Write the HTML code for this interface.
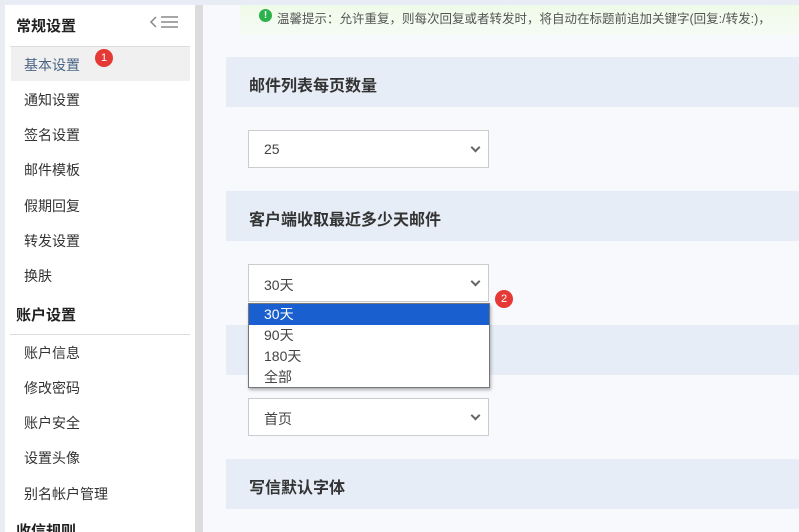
<!DOCTYPE html>
<html><head><meta charset="utf-8"><style>
*{margin:0;padding:0;box-sizing:border-box}
html,body{width:799px;height:532px;overflow:hidden}
body{background:#f8f9fc;font-family:"Liberation Sans","Noto Sans CJK SC",sans-serif;position:relative}
.a{position:absolute}
.side{left:5px;top:5px;width:190px;height:527px;background:#fff}
.h{position:absolute;left:16px;font-size:15px;font-weight:bold;color:#222}
.it{position:absolute;left:24px;font-size:14px;color:#333}
.hd{position:absolute;left:226px;width:573px;height:50px;background:#e6edf6}
.hd span{position:absolute;left:23px;top:15px;font-size:16px;font-weight:bold;color:#333}
.sel{position:absolute;left:248px;width:241px;height:38px;background:#fff;border:1px solid #ccc;font-size:14px;color:#444;padding:10px 0 0 15px}
.sel:after{content:"";position:absolute;right:9px;top:13px;width:5px;height:5px;border-right:2px solid #666;border-bottom:2px solid #666;transform:rotate(45deg)}
.badge{position:absolute;width:18px;height:18px;border-radius:50%;background:#e53935;color:#fff;font-size:11px;text-align:center;line-height:18px}
</style></head><body>
<div class="a" style="left:0;top:0;width:799px;height:5px;background:#e8edf5"></div>
<div class="a" style="left:0;top:0;width:5px;height:532px;background:#e9ecf1"></div>
<div class="a side"></div>
<div class="a" style="left:195px;top:5px;width:8px;height:527px;background:#dcdcdc"></div>
<div class="a" style="left:226px;top:5px;width:573px;height:527px;background:#f7f9fd"></div>
<div class="h" style="top:15px">常规设置</div>
<svg class="a" style="left:148px;top:14px" width="32" height="18" viewBox="0 0 32 18"><path d="M8 3 L3 8 L8 13" fill="none" stroke="#888" stroke-width="1.5"/><path d="M13 3H30M13 8H30M13 13H30" stroke="#888" stroke-width="1.6"/></svg>
<div class="a" style="left:10px;top:46px;width:180px;height:1px;background:#ddd"></div>
<div class="a" style="left:11px;top:47px;width:179px;height:34px;background:#f0f0f0"></div>
<div class="it" style="top:55px;color:#4a6585">基本设置</div>
<div class="badge" style="left:95px;top:49px">1</div>
<div class="it" style="top:90px">通知设置</div>
<div class="it" style="top:125px">签名设置</div>
<div class="it" style="top:160px">邮件模板</div>
<div class="it" style="top:196px">假期回复</div>
<div class="it" style="top:231px">转发设置</div>
<div class="it" style="top:266px">换肤</div>
<div class="h" style="top:304px">账户设置</div>
<div class="a" style="left:10px;top:334px;width:180px;height:1px;background:#ddd"></div>
<div class="it" style="top:343px">账户信息</div>
<div class="it" style="top:378px">修改密码</div>
<div class="it" style="top:413px">账户安全</div>
<div class="it" style="top:448px">设置头像</div>
<div class="it" style="top:484px">别名帐户管理</div>
<div class="h" style="top:520px">收信规则</div>
<div class="a" style="left:240px;top:5px;width:559px;height:30px;background:linear-gradient(#effbe9,#f6fbf4)"></div>
<div class="a" style="left:259px;top:9px;width:13px;height:13px;border-radius:50%;background:#2bb24c;color:#fff;font-size:10px;font-weight:bold;text-align:center;line-height:13px">!</div>
<div class="a" style="left:277px;top:8px;font-size:12.5px;color:#555;white-space:nowrap">温馨提示：允许重复，则每次回复或者转发时，将自动在标题前追加关键字(回复:/转发:)，</div>
<div class="hd" style="top:57px"><span>邮件列表每页数量</span></div>
<div class="sel" style="top:130px">25</div>
<div class="hd" style="top:191px"><span>客户端收取最近多少天邮件</span></div>
<div class="sel" style="top:264px">30天</div>
<div class="badge" style="left:495px;top:290px">2</div>
<div class="hd" style="top:325px"></div>
<div class="sel" style="top:398px">首页</div>
<div class="hd" style="top:459px"><span>写信默认字体</span></div>
<div class="a" style="left:248px;top:303px;width:242px;height:85px;background:#fff;border:1px solid #777;box-shadow:1px 2px 3px rgba(0,0,0,.3);font-size:14px;color:#444;line-height:21px">
<div style="background:#1a5fd0;color:#fff;padding-left:15px;height:21px">30天</div>
<div style="padding-left:15px">90天</div>
<div style="padding-left:15px">180天</div>
<div style="padding-left:15px">全部</div>
</div>
</body></html>
